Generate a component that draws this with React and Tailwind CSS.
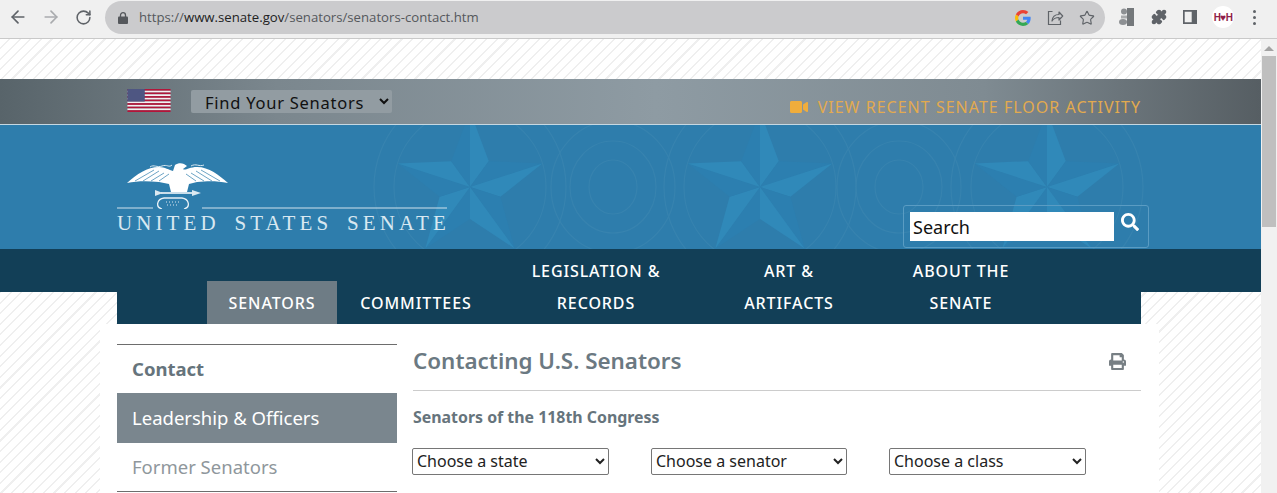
import { ArrowLeft, ArrowRight, RotateCw, Star, Puzzle } from 'lucide-react'
import { FaPrint, FaSearch, FaVideo } from 'react-icons/fa'

const FONT = "font-['Noto_Sans','Open_Sans',sans-serif]"

// Chrome toolbar icons
function GoogleIcon() {
  return (
    <svg width="16" height="16" viewBox="0 0 48 48">
      <path fill="#EA4335" d="M24 9.500c3.500 0 6.700 1.200 9.200 3.600l6.900-6.900C35.900 2.400 30.400 0 24 0 14.600 0 6.500 5.400 2.600 13.200l8 6.200C12.500 13.700 17.800 9.500 24 9.500z" />
      <path fill="#4285F4" d="M47 24.500c0-1.600-.1-3.100-.4-4.500H24v9h12.900c-.6 3-2.200 5.500-4.700 7.200l7.700 6C44.400 37.900 47 31.800 47 24.500z" />
      <path fill="#FBBC05" d="M10.600 28.600c-.5-1.400-.8-3-.8-4.600s.3-3.200.8-4.600l-8-6.200C.9 16.500 0 20.100 0 24s.9 7.500 2.600 10.800l8-6.200z" />
      <path fill="#34A853" d="M24 48c6.500 0 11.900-2.100 15.900-5.800l-7.700-6c-2.200 1.500-4.900 2.300-8.200 2.300-6.200 0-11.500-4.200-13.400-9.900l-8 6.200C6.500 42.600 14.600 48 24 48z" />
    </svg>
  )
}

function LockIcon() {
  return (
    <svg width="10" height="12" viewBox="0 0 10 12" fill="none">
      <rect x="0" y="4.500" width="10" height="7.500" rx="1" fill="#55585c" />
      <path d="M2.500 5V3.200a2.500 2.500 0 0 1 5 0V5" stroke="#55585c" strokeWidth="1.300" />
    </svg>
  )
}

function ShareIcon() {
  return (
    <svg width="18" height="18" viewBox="0 0 18 18" fill="none" stroke="#5f6368" strokeWidth="1.200">
      <path d="M6.500 2.500H2.500v13h12v-4" />
      <path d="M6 12c.4-4 3-6.500 7-6.500V3l3.700 4-3.700 4V8.500c-3 0-5.500 1-7 3.500z" strokeLinejoin="round" />
    </svg>
  )
}

function ExtensionIcon() {
  return (
    <svg width="16" height="20" viewBox="0 0 16 20">
      <rect x="8" y="1" width="7" height="18" fill="#74787b" />
      <circle cx="5" cy="4.500" r="3" fill="#8d9093" />
      <ellipse cx="4" cy="15" rx="4" ry="3" fill="#8d9093" />
      <rect x="2" y="8.500" width="6" height="3" fill="#a9abad" />
    </svg>
  )
}

function SidePanelIcon() {
  return (
    <svg width="14" height="14" viewBox="0 0 14 14">
      <path fill="#5f6368" fillRule="evenodd" d="M0 0h14v14H0zM1.700 1.700v10.600h7V1.700z" />
    </svg>
  )
}

function Toolbar() {
  return (
    <div className="flex h-[39px] shrink-0 items-start border-b border-[#c9c9c9] bg-[#f0f0f0]">
      <div className="flex h-[34px] w-[105px] items-center pl-[8px]">
        <ArrowLeft size={20} strokeWidth={2} className="text-[#5f6368]" />
        <ArrowRight size={20} strokeWidth={2} className="ml-[13px] text-[#a9abae]" />
        <RotateCw size={17} strokeWidth={2.200} className="ml-[14px] text-[#5f6368]" />
      </div>
      <div className="mt-px flex h-[33px] w-[1000px] items-center rounded-full bg-[#cbcbcd] pl-[13px]">
        <LockIcon />
        <div className="ml-[11px] font-['Open_Sans',sans-serif] text-[13.180px] text-[#55585c]">
          https://<span className="text-[#222]">www.senate.gov</span>/senators/senators-contact.htm
        </div>
        <div className="ml-auto flex items-center gap-[15px] pr-[10px]">
          <GoogleIcon />
          <ShareIcon />
          <Star size={16} strokeWidth={1.700} className="text-[#5f6368]" />
        </div>
      </div>
      <div className="flex h-[34px] flex-1 items-center pl-[14px]">
        <ExtensionIcon />
        <Puzzle size={16} className="ml-[16px] text-[#5f6368]" fill="#5f6368" />
        <div className="ml-[16px]"><SidePanelIcon /></div>
        <div className="ml-[15px] flex h-[22px] w-[22px] items-center justify-center rounded-full bg-white font-['Liberation_Sans',sans-serif] text-[10px] font-bold tracking-[-.6px] text-[#8f1d4a]">
          H♥H
        </div>
        <div className="ml-[19px] flex flex-col gap-[3px]">
          <span className="h-[3px] w-[3px] rounded-full bg-[#5f6368]" />
          <span className="h-[3px] w-[3px] rounded-full bg-[#5f6368]" />
          <span className="h-[3px] w-[3px] rounded-full bg-[#5f6368]" />
        </div>
      </div>
    </div>
  )
}

function Flag() {
  const stripes = [0, 1, 2, 3, 4, 5, 6, 7, 8, 9, 10, 11, 12]
  return (
    <svg width="44" height="23" viewBox="0 0 45 24" className="block shrink-0">
      {stripes.map((i) => (
        <rect key={i} x="0" y={i * (24 / 13)} width="45" height={24 / 13} fill={i % 2 ? '#f4f0f2' : '#b3153a'} />
      ))}
      <rect width="18" height="13" fill="#2c3568" />
      <rect width="18" height="13" fill="#8f95b5" opacity="0.35" />
    </svg>
  )
}

function TopBar() {
  return (
    <div className="h-[46px] border-b border-[#c6d8e2] bg-[linear-gradient(90deg,#58646a_0%,#7b878e_22%,#8e9ba3_52%,#7f8b92_78%,#565e63_100%)]">
      <div className="ml-[127px] flex h-full w-[1014px] items-start">
        <div className="mt-[10px]"><Flag /></div>
        <select className="mt-[11px] ml-[20px] h-[23px] w-[201px] rounded-[2px] bg-[#929ca2] pl-[10px] text-[16.500px] tracking-[.75px] text-[#111]">
          <option>Find Your Senators</option>
        </select>
        <div className="mt-[17px] ml-auto flex items-center text-[16px] leading-[22px] tracking-[1.020px] text-[#e2aa4f]">
          <FaVideo size={18} className="text-[#f0ad3c]" />
          <span className="ml-[10px]">VIEW RECENT SENATE FLOOR ACTIVITY</span>
        </div>
      </div>
    </div>
  )
}

// faceted five point star, every other facet is lighter
function FacetStar({ cx, cy, r }) {
  const pts = []
  for (let i = 0; i < 10; i++) {
    const rad = i % 2 ? r * 0.42 : r
    const a = -Math.PI / 2 + (i * Math.PI) / 5
    pts.push([cx + rad * Math.cos(a), cy + rad * Math.sin(a)])
  }
  return (
    <g>
      {pts.map((p, i) => {
        const q = pts[(i + 1) % 10]
        return <polygon key={i} points={`${cx},${cy} ${p[0]},${p[1]} ${q[0]},${q[1]}`} fill={i % 2 ? '#2c7fb0' : '#3089b9'} />
      })}
    </g>
  )
}

function Seal() {
  const stars = [470, 760, 1047]
  const rings = [613, 899]
  return (
    <svg className="absolute inset-0" width="1261" height="124" viewBox="0 125 1261 124" fill="none">
      {stars.map((x) => (
        <g key={x}>
          <FacetStar cx={x} cy={187} r={76} />
          <ellipse cx={x} cy={187} rx={76} ry={78} stroke="#3783af" strokeWidth="1.200" />
          <ellipse cx={x} cy={187} rx={96} ry={98} stroke="#3783af" strokeWidth="1.200" />
        </g>
      ))}
      {rings.map((x) => (
        <g key={x} stroke="#3783af" strokeWidth="1.200">
          <ellipse cx={x} cy={187} rx={24} ry={27} />
          <ellipse cx={x} cy={187} rx={43} ry={46} />
          <ellipse cx={x} cy={187} rx={62} ry={66} />
        </g>
      ))}
    </svg>
  )
}

function Eagle() {
  return (
    <svg width="331" height="47" viewBox="0 0 331 47" fill="none" className="block">
      <path fill="#fff" d="M10 21C20 12 30 5 42 5c6 0 10 3 14 4l2-6c4-3 9-2 12 1l-4 3c2 2 6-2 14-2 12 0 22 8 31 16-11-2-19-2-31-1l-8 2-2 8H54l-2-8-10-2C30 19 20 19 10 21z" />
      <path stroke="#2e7dac" strokeWidth=".7" d="M18 19 37 8M26 19 42 9M34 19 47 11M42 19 52 12M103 19 84 8M95 19 79 9M87 19 74 11M79 19 69 12" />
      <path stroke="#dbe9f1" strokeWidth="1" d="M33 5c4-3 7 1 12-1s7 2 10-1M74 4c5-3 8 1 13-1" />
      <path stroke="#fff" strokeWidth="1.500" d="M44 31h33" />
      <path fill="#dbe9f1" d="M38 28l8 3-8 3zM75 28l9 3-9 3z" />
      <path stroke="#e6f0f6" strokeWidth="1.300" d="M45 47c-7-2-5-10 2-11h18c7 1 9 9 2 11" />
      <path stroke="#dbe9f1" strokeDasharray="1 2" d="M49 40h14M50 43h12" />
      <path stroke="#cfe2ec" strokeWidth="1.200" d="M0 46h36M85 46h245" />
    </svg>
  )
}

function Masthead() {
  return (
    <div className="relative h-[124px] overflow-hidden bg-[#2e7dac]">
      <Seal />
      <div className="relative ml-[117px] flex h-full w-[1032px] items-start justify-between">
        <div className="mt-[37px]">
          <Eagle />
          <div className="mt-[2px] font-['Liberation_Serif',serif] text-[21px] leading-[24px] tracking-[4.100px] [word-spacing:5.500px] whitespace-nowrap text-[#d8e8f1]">
            UNITED STATES SENATE
          </div>
        </div>
        <div className="mt-[80px] flex h-[43px] w-[246px] items-start rounded-[3px] border border-[#5a9cc3] pt-[6px] pl-[6px]">
          <input readOnly value="Search" className="h-[29px] w-[204px] bg-white pl-[3px] text-[18px] text-[#111]" />
          <FaSearch size={18} className="mt-px ml-[7px] text-white" />
        </div>
      </div>
    </div>
  )
}

function Nav() {
  const items = [
    { lines: ['COMMITTEES'], w: 'w-[158px]' },
    { lines: ['LEGISLATION &', 'RECORDS'], w: 'w-[202px]' },
    { lines: ['ART &', 'ARTIFACTS'], w: 'w-[184px]' },
    { lines: ['ABOUT THE', 'SENATE'], w: 'w-[160px]' },
  ]
  return (
    <div className="h-[43px] bg-[#123f57]">
      <div className="ml-[117px] flex h-[75px] w-[1024px] items-end bg-[#123f57] pb-[5px] pl-[90px] text-[16px] leading-[32px] font-medium tracking-[.9px] text-white">
        <div className="-mb-[5px] flex h-[43px] w-[130px] items-center justify-center bg-[#6e7c85]">SENATORS</div>
        {items.map((item) => (
          <div key={item.lines[0]} className={`${item.w} text-center`}>
            {item.lines.map((l) => <div key={l}>{l}</div>)}
          </div>
        ))}
      </div>
    </div>
  )
}

function Sidebar() {
  return (
    <div className="w-[280px] shrink-0 border-y border-[#6d6d6d]">
      <div className="flex h-[48px] items-center pl-[15px] text-[18.500px] font-bold text-[#66747c]">Contact</div>
      <div className="flex h-[50px] items-center bg-[#7a868e] pl-[15px] text-[18.500px] text-white">Leadership &amp; Officers</div>
      <div className="flex h-[48px] items-center pl-[15px] text-[18.500px] text-[#8f979c]">Former Senators</div>
    </div>
  )
}

function Content() {
  const selects = [
    { label: 'Choose a state', w: 'w-[197px]' },
    { label: 'Choose a senator', w: 'w-[196px]' },
    { label: 'Choose a class', w: 'w-[197px]' },
  ]
  return (
    <div className="ml-[16px] w-[728px]">
      <div className="flex h-[47px] items-center justify-between border-b border-[#cccccc] pr-[15px] pb-[12px]">
        <h1 className="text-[22.400px] font-semibold text-[#6b7982]">Contacting U.S. Senators</h1>
        <FaPrint size={17} className="text-[#777f84]" />
      </div>
      <div className="mt-[15px] text-[15.900px] leading-[22px] font-bold text-[#66747c]">Senators of the 118th Congress</div>
      <div className="mt-[20px] -ml-px flex gap-[42px]">
        {selects.map((s) => (
          <select key={s.label} className={`${s.w} h-[27px] rounded-[2px] border border-[#767676] bg-white pb-px text-[16px] text-[#222]`}>
            <option>{s.label}</option>
          </select>
        ))}
      </div>
    </div>
  )
}

export default function App() {
  return (
    <div className={`flex h-[493px] w-[1277px] flex-col overflow-hidden bg-white ${FONT}`}>
      <Toolbar />
      <div className="flex flex-1">
        <div className="w-[1261px] bg-[repeating-linear-gradient(135deg,#ffffff_0px,#ffffff_6px,#efefef_6px,#efefef_7.500px)]">
          <div className="h-[40px]" />
          <TopBar />
          <Masthead />
          <Nav />
          <div className="mt-[32px] ml-[100px] h-[169px] w-[1059px] bg-white pt-[20px] pl-[17px]">
            <div className="flex w-[1024px] items-start">
              <Sidebar />
              <Content />
            </div>
          </div>
        </div>
        <div className="w-[16px] bg-[#f1f1f1] pt-[7px]">
          <div className="mx-auto h-0 w-0 border-x-[5px] border-b-[5px] border-x-transparent border-b-[#a3a3a3]" />
          <div className="mx-px mt-[5px] h-[171px] bg-[#bfbfbf]" />
        </div>
      </div>
    </div>
  )
}
